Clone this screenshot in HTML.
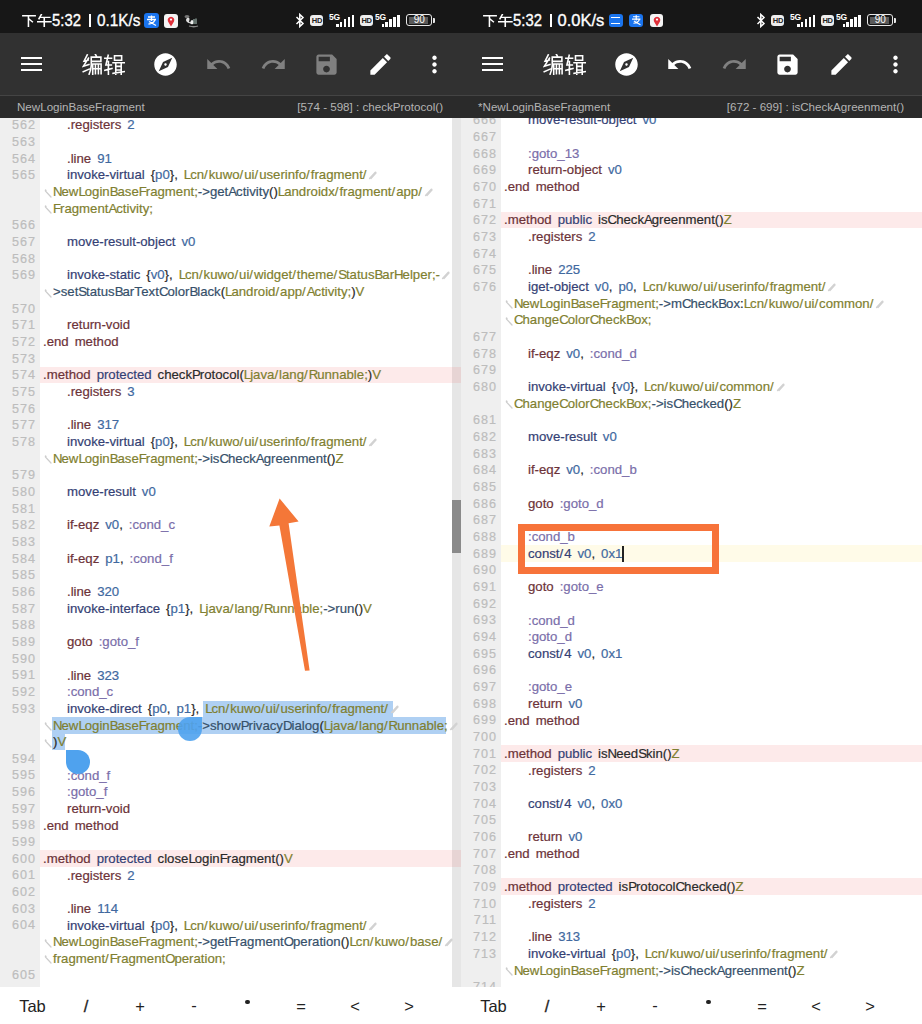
<!DOCTYPE html>
<html><head><meta charset="utf-8"><style>
*{margin:0;padding:0;box-sizing:border-box}
html,body{width:922px;height:1024px;overflow:hidden;background:#fff}
body{position:relative;font-family:"Liberation Sans",sans-serif}
.pn{position:absolute;top:0;width:461px;height:1024px;overflow:hidden;background:#fff}
.sb{position:absolute;left:0;top:0;width:461px;height:33px;background:#171717}
.tb{position:absolute;left:0;top:33px;width:461px;height:62px;background:#313131}
.dv{position:absolute;left:0;top:94.5px;width:461px;height:1.5px;background:#444}
.sh{position:absolute;left:0;top:96px;width:461px;height:22px;background:#2a2a2a;color:#b4b4b4;font-size:11.6px}
.code{position:absolute;left:0;top:118px;width:461px;height:869px;overflow:hidden}
.gut{position:absolute;left:0;top:118px;width:40px;height:869px;background:#efefef}
.ln{position:absolute;left:0;width:36.2px;text-align:right;color:#bdbdbd;letter-spacing:1.1px;-webkit-text-stroke:0.2px currentColor;font-size:12.6px;line-height:16.67px;height:16.67px;white-space:pre}
.cl{position:absolute;font-size:13.2px;line-height:16.67px;height:16.67px;white-space:pre;word-spacing:2.3px;-webkit-text-stroke:0.2px currentColor}
.cl i{font-style:normal;letter-spacing:1px}
.cl b{font-weight:normal;letter-spacing:-1px}
.hl{position:absolute;left:40px;width:421px;height:16.67px}
.pk{background:rgba(240,80,80,0.12)}
.yl{background:#fffbe8}
.we{display:inline-block;vertical-align:-1px;margin-left:1px}
.wsw{position:absolute;left:43.5px;width:9px;height:9px;line-height:0}
.K{color:#6c3238} .N{color:#343f74} .B{color:#41699f} .O{color:#7f7f30} .T{color:#36506a} .P{color:#7a6eaa} .D{color:#2a2a2a}
.bb{position:absolute;left:0;top:987px;width:461px;height:37px;background:#fff;color:#222;font-size:16.5px}
.bk{position:absolute;top:9px;width:54px;margin-left:-27px;text-align:center;line-height:20px}
</style></head><body>
<div class="pn" style="left:0px">
<div class="sb"></div>
<div class="tb"></div>
<div style="position:absolute;left:21px;top:56.5px;width:21px;height:2.2px;background:#fff"></div>
<div style="position:absolute;left:21px;top:62.8px;width:21px;height:2.2px;background:#fff"></div>
<div style="position:absolute;left:21px;top:69.1px;width:21px;height:2.2px;background:#fff"></div>
<svg style="position:absolute;left:82px;top:54px" width="21" height="21" viewBox="0 0 100 100" preserveAspectRatio="none"><path d="M25 4 L10 34 L30 29 M31 20 L7 58 L33 50 M6 84 L34 72 M64 2 L68 9 M44 15 H90 V35 H44 M44 15 V55 Q42 80 34 96 M51 48 H91 V94 M51 48 V96 M64 48 V94 M78 48 V94 M51 70 H91" stroke="#fff" stroke-width="7.5" fill="none" stroke-linecap="square"/></svg>
<svg style="position:absolute;left:104px;top:54px" width="21" height="21" viewBox="0 0 100 100" preserveAspectRatio="none"><path d="M4 20 H36 M20 6 L9 52 H35 M21 36 V98 M4 78 L38 69 M50 8 H84 V30 H50 Z M43 42 H97 M56 42 V96 M82 42 V96 M56 59 H82 M56 76 H82 M43 92 L97 84" stroke="#fff" stroke-width="7.5" fill="none" stroke-linecap="square"/></svg>
<svg style="position:absolute;left:152.00px;top:50.80px" width="27" height="27" viewBox="0 0 24 24"><path fill="#fff" d="M12 10.9c-.61 0-1.1.49-1.1 1.1s.49 1.1 1.1 1.1c.61 0 1.1-.49 1.1-1.1s-.49-1.1-1.1-1.1zM12 2C6.48 2 2 6.48 2 12s4.48 10 10 10 10-4.48 10-10S17.52 2 12 2zm2.19 12.19L6 18l3.81-8.19L18 6l-3.81 8.19z"/></svg>
<svg style="position:absolute;left:205.40px;top:50.80px" width="27" height="27" viewBox="0 0 24 24"><path fill="#808080" d="M12.5 8c-2.65 0-5.05.99-6.9 2.6L2 7v9h9l-3.62-3.62c1.39-1.16 3.16-1.88 5.12-1.88 3.54 0 6.55 2.31 7.6 5.5l2.37-.78C21.08 11.03 17.15 8 12.5 8z"/></svg>
<svg style="position:absolute;left:259.50px;top:50.80px" width="27" height="27" viewBox="0 0 24 24"><path fill="#808080" d="M18.4 10.6C16.55 8.99 14.15 8 11.5 8c-4.65 0-8.58 3.03-9.960 7.22L3.9 16c1.05-3.19 4.05-5.5 7.6-5.5 1.95 0 3.73.72 5.12 1.88L13 16h9V7l-3.6 3.6z"/></svg>
<svg style="position:absolute;left:313.20px;top:50.80px" width="27" height="27" viewBox="0 0 24 24"><path fill="#808080" d="M17 3H5c-1.11 0-2 .9-2 2v14c0 1.1.89 2 2 2h14c1.1 0 2-.9 2-2V7l-4-4zm-5 16c-1.66 0-3-1.34-3-3s1.34-3 3-3 3 1.34 3 3-1.34 3-3 3zm3-10H5V5h10v4z"/></svg>
<svg style="position:absolute;left:366.60px;top:50.80px" width="27" height="27" viewBox="0 0 24 24"><path fill="#fff" d="M3 17.25V21h3.75L17.81 9.94l-3.75-3.75L3 17.25zM20.71 7.04c.39-.39.39-1.02 0-1.41l-2.34-2.34c-.39-.39-1.02-.39-1.41 0l-1.83 1.83 3.75 3.75 1.83-1.83z"/></svg>
<svg style="position:absolute;left:420.50px;top:50.80px" width="27" height="27" viewBox="0 0 24 24"><path fill="#fff" d="M12 8c1.1 0 2-.9 2-2s-.9-2-2-2-2 .9-2 2 .9 2 2 2zm0 2c-1.1 0-2 .9-2 2s.9 2 2 2 2-.9 2-2-.9-2-2-2zm0 6c-1.1 0-2 .9-2 2s.9 2 2 2 2-.9 2-2-.9-2-2-2z"/></svg>
<svg style="position:absolute;left:22px;top:14px" width="14" height="13" viewBox="0 0 100 100" preserveAspectRatio="none"><path d="M6 14 H94 M46 14 V98 M52 40 L74 60" stroke="#fff" stroke-width="11" fill="none" stroke-linecap="square"/></svg>
<svg style="position:absolute;left:37px;top:14px" width="14.5" height="13" viewBox="0 0 100 100" preserveAspectRatio="none"><path d="M30 4 L14 36 M24 26 H88 M4 60 H96 M50 26 V98" stroke="#fff" stroke-width="11" fill="none" stroke-linecap="square"/></svg>
<div style="position:absolute;left:52px;top:9px;font-size:16.5px;line-height:22px;color:#fff;white-space:pre;transform-origin:0 50%;transform:scaleX(0.9);-webkit-text-stroke:0.35px #fff">5:32</div>
<div style="position:absolute;left:88.8px;top:14px;width:2.2px;height:13px;background:#fff"></div>
<div style="position:absolute;left:96.5px;top:9px;font-size:16.5px;line-height:22px;color:#fff;white-space:pre;transform-origin:0 50%;transform:scaleX(0.93);-webkit-text-stroke:0.35px #fff">0.1K/s</div>
<div style="position:absolute;left:144px;top:13.2px;width:14.5px;height:15px;background:#1a74ee;border-radius:3px"></div><svg style="position:absolute;left:144px;top:13.2px" width="14.5" height="15" viewBox="0 0 14.5 15"><path d="M4 4 H11 M7.5 2.5 V8 M3 6.5 H12 M4.5 11 Q9 11 11 7 M5 8.5 L12 12.5" stroke="#fff" stroke-width="1.3" fill="none"/></svg><div style="position:absolute;left:163.8px;top:13.5px;width:14px;height:14.5px;background:#f4f4f4;border-radius:3px"></div><svg style="position:absolute;left:163.8px;top:13.5px" width="14" height="14.5" viewBox="0 0 14 14.5"><path d="M7 12.5 L4 7.5 A3.3 3.3 0 1 1 10 7.5 Z" fill="#e0303a"/><circle cx="7" cy="5.6" r="1.1" fill="#fff"/></svg><svg style="position:absolute;left:183px;top:14px" width="18" height="15" viewBox="0 0 18 15"><ellipse cx="4" cy="2.5" rx="2.5" ry="1.6" fill="#777"/><path d="M4 4 Q7 3 6.5 6 Q5 8 8 8.5 Q6 10 4 8 Q2 6 4 4Z" fill="#ddd"/><path d="M8 6.5 Q10 5 10.5 8 L10 10 Q8 11 7 9Z" fill="#eee"/><path d="M11 5 V10 M13 4.5 V10" stroke="#9bb0a8" stroke-width="1.2"/><path d="M6 12 Q11 13.5 15 12" stroke="#888" stroke-width="1.3" fill="none"/></svg>
<svg style="position:absolute;left:295px;top:13px" width="10" height="15" viewBox="0 0 10 15"><path d="M1.5 4 L8 10.5 L4.8 13.5 V1.5 L8 4.5 L1.5 11" stroke="#fff" stroke-width="1.5" fill="none"/></svg>
<div style="position:absolute;left:310.4px;top:15px;width:13px;height:11.3px;background:#eee;border-radius:3px;color:#222;font-size:7.5px;font-weight:bold;line-height:11.3px;text-align:center;letter-spacing:-0.3px">HD</div>
<div style="position:absolute;left:329px;top:11.5px;font-size:8.5px;line-height:10px;color:#fff;font-weight:bold;letter-spacing:-0.3px">5G</div><div style="position:absolute;left:336.0px;top:23.7px;width:2.6px;height:3px;background:#fff"></div><div style="position:absolute;left:339.9px;top:21.7px;width:2.6px;height:5px;background:#fff"></div><div style="position:absolute;left:343.8px;top:19.2px;width:2.6px;height:7.5px;background:#fff"></div><div style="position:absolute;left:347.7px;top:17.2px;width:2.6px;height:9.5px;background:#fff"></div><div style="position:absolute;left:351.6px;top:14.7px;width:2.6px;height:12px;background:#fff"></div>
<div style="position:absolute;left:360px;top:15px;width:13px;height:11.3px;background:#eee;border-radius:3px;color:#222;font-size:7.5px;font-weight:bold;line-height:11.3px;text-align:center;letter-spacing:-0.3px">HD</div>
<div style="position:absolute;left:375px;top:11.5px;font-size:8.5px;line-height:10px;color:#fff;font-weight:bold;letter-spacing:-0.3px">5G</div><div style="position:absolute;left:381.5px;top:23.7px;width:2.6px;height:3px;background:#fff"></div><div style="position:absolute;left:385.4px;top:21.7px;width:2.6px;height:5px;background:#fff"></div><div style="position:absolute;left:389.3px;top:19.2px;width:2.6px;height:7.5px;background:#fff"></div><div style="position:absolute;left:393.2px;top:17.2px;width:2.6px;height:9.5px;background:#fff"></div><div style="position:absolute;left:397.1px;top:14.7px;width:2.6px;height:12px;background:#fff"></div>
<div style="position:absolute;left:406.3px;top:14.3px;width:26px;height:12.2px;border:1.5px solid #e8e8e8;border-radius:3px"></div>
<div style="position:absolute;left:408.8px;top:16.8px;width:19px;height:7.2px;background:#5a5a5a"></div>
<div style="position:absolute;left:433px;top:18.3px;width:2px;height:4.5px;background:#e8e8e8;border-radius:0 1px 1px 0"></div>
<div style="position:absolute;left:406.3px;top:14.3px;width:26px;height:12.2px;font-size:10px;line-height:12.2px;text-align:center;color:#fff">90</div>
<div class="dv"></div>
<div class="sh"><span style="position:absolute;left:17px;top:3.8px">NewLoginBaseFragment</span><span style="position:absolute;right:18px;top:3.8px">[574 - 598] : checkProtocol()</span></div>
<div class="code">
<div class="gut" style="top:0"></div>
<div style="position:absolute;left:0;top:-118px;width:461px;height:1024px">
<div style="position:absolute;left:203px;top:700.5px;width:189.5px;height:16.67px;background:#afd0f3"></div><div style="position:absolute;left:52px;top:717.2px;width:394px;height:16.67px;background:#afd0f3"></div><div style="position:absolute;left:52px;top:733.8px;width:12.6px;height:16.3px;background:#afd0f3"></div><div style="position:absolute;left:452px;top:118px;width:9px;height:869px;background:#e6e6e6"></div><div style="position:absolute;left:452px;top:500px;width:9px;height:53px;background:#8a8a8a"></div>
<div class="ln" style="top:117.20px">562</div>
<div class="cl" style="top:117.40px;left:67px"><span class="K">.registers</span> <span class="B">2</span></div>
<div class="ln" style="top:133.87px">563</div>
<div class="ln" style="top:150.54px">564</div>
<div class="cl" style="top:150.74px;left:67px"><span class="K">.line</span> <span class="B">91</span></div>
<div class="ln" style="top:167.21px">565</div>
<div class="cl" style="top:167.41px;left:67px"><span class="N">invoke-virtual</span> <span class="D">{</span><span class="B">p0</span><span class="D">},</span> <span class="O"><b>L</b>cn<i>/</i>kuwo<i>/</i>ui<i>/</i>userinfo<i>/</i>fragment<i>/</i></span><svg class="we" width="9" height="10" viewBox="0 0 9 10"><path d="M1.5 8.5 L6.8 2.6 Q7.9 1.6 8 3 L3 8.6" stroke="#d2d2d2" stroke-width="1.3" fill="none" stroke-linecap="round"/></svg></div>
<div class="wsw" style="top:187.58px"><svg class="ws" width="9" height="10" viewBox="0 0 9 10"><path d="M2 2.5 Q1 1.2 1.6 3.2 L7 9" stroke="#cdcdcd" stroke-width="1.3" fill="none" stroke-linecap="round"/></svg></div>
<div class="cl" style="top:184.08px;left:53px"><span class="O"><b>N</b>ew<b>L</b>ogin<b>B</b>ase<b>F</b>ragment;</span><span class="T">-&gt;get<b>A</b>ctivity</span><span class="D">()</span><span class="O"><b>L</b>androidx<i>/</i>fragment<i>/</i>app<i>/</i></span><svg class="we" width="9" height="10" viewBox="0 0 9 10"><path d="M1.5 8.5 L6.8 2.6 Q7.9 1.6 8 3 L3 8.6" stroke="#d2d2d2" stroke-width="1.3" fill="none" stroke-linecap="round"/></svg></div>
<div class="wsw" style="top:204.25px"><svg class="ws" width="9" height="10" viewBox="0 0 9 10"><path d="M2 2.5 Q1 1.2 1.6 3.2 L7 9" stroke="#cdcdcd" stroke-width="1.3" fill="none" stroke-linecap="round"/></svg></div>
<div class="cl" style="top:200.75px;left:53px"><span class="O"><b>F</b>ragment<b>A</b>ctivity;</span></div>
<div class="ln" style="top:217.22px">566</div>
<div class="ln" style="top:233.89px">567</div>
<div class="cl" style="top:234.09px;left:67px"><span class="N">move-result-object</span> <span class="B">v0</span></div>
<div class="ln" style="top:250.56px">568</div>
<div class="ln" style="top:267.23px">569</div>
<div class="cl" style="top:267.43px;left:67px"><span class="N">invoke-static</span> <span class="D">{</span><span class="B">v0</span><span class="D">},</span> <span class="O"><b>L</b>cn<i>/</i>kuwo<i>/</i>ui<i>/</i>widget<i>/</i>theme<i>/</i><b>S</b>tatus<b>B</b>ar<b>H</b>elper;-</span><svg class="we" width="9" height="10" viewBox="0 0 9 10"><path d="M1.5 8.5 L6.8 2.6 Q7.9 1.6 8 3 L3 8.6" stroke="#d2d2d2" stroke-width="1.3" fill="none" stroke-linecap="round"/></svg></div>
<div class="wsw" style="top:287.60px"><svg class="ws" width="9" height="10" viewBox="0 0 9 10"><path d="M2 2.5 Q1 1.2 1.6 3.2 L7 9" stroke="#cdcdcd" stroke-width="1.3" fill="none" stroke-linecap="round"/></svg></div>
<div class="cl" style="top:284.10px;left:53px"><span class="T">&gt;set<b>S</b>tatus<b>B</b>ar<b>T</b>ext<b>C</b>olor<b>B</b>lack</span><span class="D">(</span><span class="O"><b>L</b>android<i>/</i>app<i>/</i><b>A</b>ctivity;</span><span class="D">)</span><span class="O"><b>V</b></span></div>
<div class="ln" style="top:300.57px">570</div>
<div class="ln" style="top:317.24px">571</div>
<div class="cl" style="top:317.44px;left:67px"><span class="K">return-void</span></div>
<div class="ln" style="top:333.91px">572</div>
<div class="cl" style="top:334.11px;left:43px"><span class="K">.end method</span></div>
<div class="ln" style="top:350.58px">573</div>
<div class="hl pk" style="top:366.65px"></div>
<div class="ln" style="top:367.25px">574</div>
<div class="cl" style="top:367.45px;left:43px"><span class="K">.method</span> <span class="N">protected</span> <span class="D">check<b>P</b>rotocol</span><span class="D">(</span><span class="O"><b>L</b>java<i>/</i>lang<i>/</i><b>R</b>unnable;</span><span class="D">)</span><span class="O"><b>V</b></span></div>
<div class="ln" style="top:383.92px">575</div>
<div class="cl" style="top:384.12px;left:67px"><span class="K">.registers</span> <span class="B">3</span></div>
<div class="ln" style="top:400.59px">576</div>
<div class="ln" style="top:417.26px">577</div>
<div class="cl" style="top:417.46px;left:67px"><span class="K">.line</span> <span class="B">317</span></div>
<div class="ln" style="top:433.93px">578</div>
<div class="cl" style="top:434.13px;left:67px"><span class="N">invoke-virtual</span> <span class="D">{</span><span class="B">p0</span><span class="D">},</span> <span class="O"><b>L</b>cn<i>/</i>kuwo<i>/</i>ui<i>/</i>userinfo<i>/</i>fragment<i>/</i></span><svg class="we" width="9" height="10" viewBox="0 0 9 10"><path d="M1.5 8.5 L6.8 2.6 Q7.9 1.6 8 3 L3 8.6" stroke="#d2d2d2" stroke-width="1.3" fill="none" stroke-linecap="round"/></svg></div>
<div class="wsw" style="top:454.30px"><svg class="ws" width="9" height="10" viewBox="0 0 9 10"><path d="M2 2.5 Q1 1.2 1.6 3.2 L7 9" stroke="#cdcdcd" stroke-width="1.3" fill="none" stroke-linecap="round"/></svg></div>
<div class="cl" style="top:450.80px;left:53px"><span class="O"><b>N</b>ew<b>L</b>ogin<b>B</b>ase<b>F</b>ragment;</span><span class="T">-&gt;is<b>C</b>heck<b>A</b>greenment</span><span class="D">()</span><span class="O"><b>Z</b></span></div>
<div class="ln" style="top:467.27px">579</div>
<div class="ln" style="top:483.94px">580</div>
<div class="cl" style="top:484.14px;left:67px"><span class="N">move-result</span> <span class="B">v0</span></div>
<div class="ln" style="top:500.61px">581</div>
<div class="ln" style="top:517.28px">582</div>
<div class="cl" style="top:517.48px;left:67px"><span class="K">if-eqz</span> <span class="B">v0</span><span class="D">,</span> <span class="P">:cond_c</span></div>
<div class="ln" style="top:533.95px">583</div>
<div class="ln" style="top:550.62px">584</div>
<div class="cl" style="top:550.82px;left:67px"><span class="K">if-eqz</span> <span class="B">p1</span><span class="D">,</span> <span class="P">:cond_f</span></div>
<div class="ln" style="top:567.29px">585</div>
<div class="ln" style="top:583.96px">586</div>
<div class="cl" style="top:584.16px;left:67px"><span class="K">.line</span> <span class="B">320</span></div>
<div class="ln" style="top:600.63px">587</div>
<div class="cl" style="top:600.83px;left:67px"><span class="N">invoke-interface</span> <span class="D">{</span><span class="B">p1</span><span class="D">},</span> <span class="O"><b>L</b>java<i>/</i>lang<i>/</i><b>R</b>unnable;</span><span class="T">-&gt;run</span><span class="D">()</span><span class="O"><b>V</b></span></div>
<div class="ln" style="top:617.30px">588</div>
<div class="ln" style="top:633.97px">589</div>
<div class="cl" style="top:634.17px;left:67px"><span class="K">goto</span> <span class="P">:goto_f</span></div>
<div class="ln" style="top:650.64px">590</div>
<div class="ln" style="top:667.31px">591</div>
<div class="cl" style="top:667.51px;left:67px"><span class="K">.line</span> <span class="B">323</span></div>
<div class="ln" style="top:683.98px">592</div>
<div class="cl" style="top:684.18px;left:67px"><span class="P">:cond_c</span></div>
<div class="ln" style="top:700.65px">593</div>
<div class="cl" style="top:700.85px;left:67px"><span class="N">invoke-direct</span> <span class="D">{</span><span class="B">p0</span><span class="D">,</span> <span class="B">p1</span><span class="D">},</span> <span class="O"><b>L</b>cn<i>/</i>kuwo<i>/</i>ui<i>/</i>userinfo<i>/</i>fragment<i>/</i></span><svg class="we" width="9" height="10" viewBox="0 0 9 10"><path d="M1.5 8.5 L6.8 2.6 Q7.9 1.6 8 3 L3 8.6" stroke="#d2d2d2" stroke-width="1.3" fill="none" stroke-linecap="round"/></svg></div>
<div class="wsw" style="top:721.02px"><svg class="ws" width="9" height="10" viewBox="0 0 9 10"><path d="M2 2.5 Q1 1.2 1.6 3.2 L7 9" stroke="#cdcdcd" stroke-width="1.3" fill="none" stroke-linecap="round"/></svg></div>
<div class="cl" style="top:717.52px;left:53px"><span class="O"><b>N</b>ew<b>L</b>ogin<b>B</b>ase<b>F</b>ragment;</span><span class="T">-&gt;show<b>P</b>rivacy<b>D</b>ialog</span><span class="D">(</span><span class="O"><b>L</b>java<i>/</i>lang<i>/</i><b>R</b>unnable;</span><svg class="we" width="9" height="10" viewBox="0 0 9 10"><path d="M1.5 8.5 L6.8 2.6 Q7.9 1.6 8 3 L3 8.6" stroke="#d2d2d2" stroke-width="1.3" fill="none" stroke-linecap="round"/></svg></div>
<div class="wsw" style="top:737.69px"><svg class="ws" width="9" height="10" viewBox="0 0 9 10"><path d="M2 2.5 Q1 1.2 1.6 3.2 L7 9" stroke="#cdcdcd" stroke-width="1.3" fill="none" stroke-linecap="round"/></svg></div>
<div class="cl" style="top:734.19px;left:53px"><span class="D">)</span><span class="O"><b>V</b></span></div>
<div class="ln" style="top:750.66px">594</div>
<div class="ln" style="top:767.33px">595</div>
<div class="cl" style="top:767.53px;left:67px"><span class="P">:cond_f</span></div>
<div class="ln" style="top:784.00px">596</div>
<div class="cl" style="top:784.20px;left:67px"><span class="P">:goto_f</span></div>
<div class="ln" style="top:800.67px">597</div>
<div class="cl" style="top:800.87px;left:67px"><span class="K">return-void</span></div>
<div class="ln" style="top:817.34px">598</div>
<div class="cl" style="top:817.54px;left:43px"><span class="K">.end method</span></div>
<div class="ln" style="top:834.01px">599</div>
<div class="hl pk" style="top:850.08px"></div>
<div class="ln" style="top:850.68px">600</div>
<div class="cl" style="top:850.88px;left:43px"><span class="K">.method</span> <span class="N">protected</span> <span class="D">close<b>L</b>ogin<b>F</b>ragment</span><span class="D">()</span><span class="O"><b>V</b></span></div>
<div class="ln" style="top:867.35px">601</div>
<div class="cl" style="top:867.55px;left:67px"><span class="K">.registers</span> <span class="B">2</span></div>
<div class="ln" style="top:884.02px">602</div>
<div class="ln" style="top:900.69px">603</div>
<div class="cl" style="top:900.89px;left:67px"><span class="K">.line</span> <span class="B">114</span></div>
<div class="ln" style="top:917.36px">604</div>
<div class="cl" style="top:917.56px;left:67px"><span class="N">invoke-virtual</span> <span class="D">{</span><span class="B">p0</span><span class="D">},</span> <span class="O"><b>L</b>cn<i>/</i>kuwo<i>/</i>ui<i>/</i>userinfo<i>/</i>fragment<i>/</i></span><svg class="we" width="9" height="10" viewBox="0 0 9 10"><path d="M1.5 8.5 L6.8 2.6 Q7.9 1.6 8 3 L3 8.6" stroke="#d2d2d2" stroke-width="1.3" fill="none" stroke-linecap="round"/></svg></div>
<div class="wsw" style="top:937.73px"><svg class="ws" width="9" height="10" viewBox="0 0 9 10"><path d="M2 2.5 Q1 1.2 1.6 3.2 L7 9" stroke="#cdcdcd" stroke-width="1.3" fill="none" stroke-linecap="round"/></svg></div>
<div class="cl" style="top:934.23px;left:53px"><span class="O"><b>N</b>ew<b>L</b>ogin<b>B</b>ase<b>F</b>ragment;</span><span class="T">-&gt;get<b>F</b>ragment<b>O</b>peration</span><span class="D">()</span><span class="O"><b>L</b>cn<i>/</i>kuwo<i>/</i>base<i>/</i></span><svg class="we" width="9" height="10" viewBox="0 0 9 10"><path d="M1.5 8.5 L6.8 2.6 Q7.9 1.6 8 3 L3 8.6" stroke="#d2d2d2" stroke-width="1.3" fill="none" stroke-linecap="round"/></svg></div>
<div class="wsw" style="top:954.40px"><svg class="ws" width="9" height="10" viewBox="0 0 9 10"><path d="M2 2.5 Q1 1.2 1.6 3.2 L7 9" stroke="#cdcdcd" stroke-width="1.3" fill="none" stroke-linecap="round"/></svg></div>
<div class="cl" style="top:950.90px;left:53px"><span class="O">fragment<i>/</i><b>F</b>ragment<b>O</b>peration;</span></div>
<div class="ln" style="top:967.37px">605</div>
</div>
</div>
<div class="bb"><div class="bk" style="left:32.5px">Tab</div><div class="bk" style="left:86px;-webkit-text-stroke:0.3px #222">/</div><div class="bk" style="left:140px">+</div><div class="bk" style="left:194px;top:7.5px">-</div><div style="position:absolute;left:245.3px;top:13px;width:4.4px;height:4.4px;border-radius:50%;background:#222"></div><div class="bk" style="left:301px">=</div><div class="bk" style="left:355px">&lt;</div><div class="bk" style="left:409px">&gt;</div></div>
</div>
<div class="pn" style="left:461px">
<div class="sb"></div>
<div class="tb"></div>
<div style="position:absolute;left:21px;top:56.5px;width:21px;height:2.2px;background:#fff"></div>
<div style="position:absolute;left:21px;top:62.8px;width:21px;height:2.2px;background:#fff"></div>
<div style="position:absolute;left:21px;top:69.1px;width:21px;height:2.2px;background:#fff"></div>
<svg style="position:absolute;left:82px;top:54px" width="21" height="21" viewBox="0 0 100 100" preserveAspectRatio="none"><path d="M25 4 L10 34 L30 29 M31 20 L7 58 L33 50 M6 84 L34 72 M64 2 L68 9 M44 15 H90 V35 H44 M44 15 V55 Q42 80 34 96 M51 48 H91 V94 M51 48 V96 M64 48 V94 M78 48 V94 M51 70 H91" stroke="#fff" stroke-width="7.5" fill="none" stroke-linecap="square"/></svg>
<svg style="position:absolute;left:104px;top:54px" width="21" height="21" viewBox="0 0 100 100" preserveAspectRatio="none"><path d="M4 20 H36 M20 6 L9 52 H35 M21 36 V98 M4 78 L38 69 M50 8 H84 V30 H50 Z M43 42 H97 M56 42 V96 M82 42 V96 M56 59 H82 M56 76 H82 M43 92 L97 84" stroke="#fff" stroke-width="7.5" fill="none" stroke-linecap="square"/></svg>
<svg style="position:absolute;left:152.00px;top:50.80px" width="27" height="27" viewBox="0 0 24 24"><path fill="#fff" d="M12 10.9c-.61 0-1.1.49-1.1 1.1s.49 1.1 1.1 1.1c.61 0 1.1-.49 1.1-1.1s-.49-1.1-1.1-1.1zM12 2C6.48 2 2 6.48 2 12s4.48 10 10 10 10-4.48 10-10S17.52 2 12 2zm2.19 12.19L6 18l3.81-8.19L18 6l-3.81 8.19z"/></svg>
<svg style="position:absolute;left:205.40px;top:50.80px" width="27" height="27" viewBox="0 0 24 24"><path fill="#fff" d="M12.5 8c-2.65 0-5.05.99-6.9 2.6L2 7v9h9l-3.62-3.62c1.39-1.16 3.16-1.88 5.12-1.88 3.54 0 6.55 2.31 7.6 5.5l2.37-.78C21.08 11.03 17.15 8 12.5 8z"/></svg>
<svg style="position:absolute;left:259.50px;top:50.80px" width="27" height="27" viewBox="0 0 24 24"><path fill="#808080" d="M18.4 10.6C16.55 8.99 14.15 8 11.5 8c-4.65 0-8.58 3.03-9.960 7.22L3.9 16c1.05-3.19 4.05-5.5 7.6-5.5 1.95 0 3.73.72 5.12 1.88L13 16h9V7l-3.6 3.6z"/></svg>
<svg style="position:absolute;left:313.20px;top:50.80px" width="27" height="27" viewBox="0 0 24 24"><path fill="#fff" d="M17 3H5c-1.11 0-2 .9-2 2v14c0 1.1.89 2 2 2h14c1.1 0 2-.9 2-2V7l-4-4zm-5 16c-1.66 0-3-1.34-3-3s1.34-3 3-3 3 1.34 3 3-1.34 3-3 3zm3-10H5V5h10v4z"/></svg>
<svg style="position:absolute;left:366.60px;top:50.80px" width="27" height="27" viewBox="0 0 24 24"><path fill="#fff" d="M3 17.25V21h3.75L17.81 9.94l-3.75-3.75L3 17.25zM20.71 7.04c.39-.39.39-1.02 0-1.41l-2.34-2.34c-.39-.39-1.02-.39-1.41 0l-1.83 1.83 3.75 3.75 1.83-1.83z"/></svg>
<svg style="position:absolute;left:420.50px;top:50.80px" width="27" height="27" viewBox="0 0 24 24"><path fill="#fff" d="M12 8c1.1 0 2-.9 2-2s-.9-2-2-2-2 .9-2 2 .9 2 2 2zm0 2c-1.1 0-2 .9-2 2s.9 2 2 2 2-.9 2-2-.9-2-2-2zm0 6c-1.1 0-2 .9-2 2s.9 2 2 2 2-.9 2-2-.9-2-2-2z"/></svg>
<svg style="position:absolute;left:22px;top:14px" width="14" height="13" viewBox="0 0 100 100" preserveAspectRatio="none"><path d="M6 14 H94 M46 14 V98 M52 40 L74 60" stroke="#fff" stroke-width="11" fill="none" stroke-linecap="square"/></svg>
<svg style="position:absolute;left:37px;top:14px" width="14.5" height="13" viewBox="0 0 100 100" preserveAspectRatio="none"><path d="M30 4 L14 36 M24 26 H88 M4 60 H96 M50 26 V98" stroke="#fff" stroke-width="11" fill="none" stroke-linecap="square"/></svg>
<div style="position:absolute;left:52px;top:9px;font-size:16.5px;line-height:22px;color:#fff;white-space:pre;transform-origin:0 50%;transform:scaleX(0.9);-webkit-text-stroke:0.35px #fff">5:32</div>
<div style="position:absolute;left:88.8px;top:14px;width:2.2px;height:13px;background:#fff"></div>
<div style="position:absolute;left:96.5px;top:9px;font-size:16.5px;line-height:22px;color:#fff;white-space:pre;transform-origin:0 50%;transform:scaleX(1.0);-webkit-text-stroke:0.35px #fff">0.0K/s</div>
<div style="position:absolute;left:147.7px;top:14px;width:14px;height:12.8px;background:#1a74ee;border-radius:3px"></div><div style="position:absolute;left:150.2px;top:17px;width:9px;height:6.5px;border-top:1.5px solid #fff;border-bottom:1.5px solid #fff"></div><div style="position:absolute;left:168px;top:14px;width:14px;height:12.8px;background:#1a74ee;border-radius:3px"></div><svg style="position:absolute;left:168px;top:13.2px" width="14" height="14" viewBox="0 0 14.5 15"><path d="M4 4 H11 M7.5 2.5 V8 M3 6.5 H12 M4.5 11 Q9 11 11 7 M5 8.5 L12 12.5" stroke="#fff" stroke-width="1.3" fill="none"/></svg><div style="position:absolute;left:188.5px;top:14px;width:13.6px;height:12.8px;background:#f4f4f4;border-radius:3px"></div><svg style="position:absolute;left:188.5px;top:13.5px" width="14" height="14.5" viewBox="0 0 14 14.5"><path d="M7 12.5 L4 7.5 A3.3 3.3 0 1 1 10 7.5 Z" fill="#e0303a"/><circle cx="7" cy="5.6" r="1.1" fill="#fff"/></svg>
<svg style="position:absolute;left:295px;top:13px" width="10" height="15" viewBox="0 0 10 15"><path d="M1.5 4 L8 10.5 L4.8 13.5 V1.5 L8 4.5 L1.5 11" stroke="#fff" stroke-width="1.5" fill="none"/></svg>
<div style="position:absolute;left:310.4px;top:15px;width:13px;height:11.3px;background:#eee;border-radius:3px;color:#222;font-size:7.5px;font-weight:bold;line-height:11.3px;text-align:center;letter-spacing:-0.3px">HD</div>
<div style="position:absolute;left:329px;top:11.5px;font-size:8.5px;line-height:10px;color:#fff;font-weight:bold;letter-spacing:-0.3px">5G</div><div style="position:absolute;left:336.0px;top:23.7px;width:2.6px;height:3px;background:#fff"></div><div style="position:absolute;left:339.9px;top:21.7px;width:2.6px;height:5px;background:#fff"></div><div style="position:absolute;left:343.8px;top:19.2px;width:2.6px;height:7.5px;background:#fff"></div><div style="position:absolute;left:347.7px;top:17.2px;width:2.6px;height:9.5px;background:#fff"></div><div style="position:absolute;left:351.6px;top:14.7px;width:2.6px;height:12px;background:#fff"></div>
<div style="position:absolute;left:360px;top:15px;width:13px;height:11.3px;background:#eee;border-radius:3px;color:#222;font-size:7.5px;font-weight:bold;line-height:11.3px;text-align:center;letter-spacing:-0.3px">HD</div>
<div style="position:absolute;left:375px;top:11.5px;font-size:8.5px;line-height:10px;color:#fff;font-weight:bold;letter-spacing:-0.3px">5G</div><div style="position:absolute;left:381.5px;top:23.7px;width:2.6px;height:3px;background:#fff"></div><div style="position:absolute;left:385.4px;top:21.7px;width:2.6px;height:5px;background:#fff"></div><div style="position:absolute;left:389.3px;top:19.2px;width:2.6px;height:7.5px;background:#fff"></div><div style="position:absolute;left:393.2px;top:17.2px;width:2.6px;height:9.5px;background:#fff"></div><div style="position:absolute;left:397.1px;top:14.7px;width:2.6px;height:12px;background:#fff"></div>
<div style="position:absolute;left:406.3px;top:14.3px;width:26px;height:12.2px;border:1.5px solid #e8e8e8;border-radius:3px"></div>
<div style="position:absolute;left:408.8px;top:16.8px;width:19px;height:7.2px;background:#5a5a5a"></div>
<div style="position:absolute;left:433px;top:18.3px;width:2px;height:4.5px;background:#e8e8e8;border-radius:0 1px 1px 0"></div>
<div style="position:absolute;left:406.3px;top:14.3px;width:26px;height:12.2px;font-size:10px;line-height:12.2px;text-align:center;color:#fff">90</div>
<div class="dv"></div>
<div class="sh"><span style="position:absolute;left:17px;top:3.8px">*NewLoginBaseFragment</span><span style="position:absolute;right:18px;top:3.8px">[672 - 699] : isCheckAgreenment()</span></div>
<div class="code">
<div class="gut" style="top:0"></div>
<div style="position:absolute;left:0;top:-118px;width:461px;height:1024px">

<div class="ln" style="top:112.20px">666</div>
<div class="cl" style="top:112.40px;left:67px"><span class="N">move-result-object</span> <span class="B">v0</span></div>
<div class="ln" style="top:128.87px">667</div>
<div class="ln" style="top:145.54px">668</div>
<div class="cl" style="top:145.74px;left:67px"><span class="P">:goto_13</span></div>
<div class="ln" style="top:162.21px">669</div>
<div class="cl" style="top:162.41px;left:67px"><span class="K">return-object</span> <span class="B">v0</span></div>
<div class="ln" style="top:178.88px">670</div>
<div class="cl" style="top:179.08px;left:43px"><span class="K">.end method</span></div>
<div class="ln" style="top:195.55px">671</div>
<div class="hl pk" style="top:211.62px"></div>
<div class="ln" style="top:212.22px">672</div>
<div class="cl" style="top:212.42px;left:43px"><span class="K">.method</span> <span class="N">public</span> <span class="D">is<b>C</b>heck<b>A</b>greenment</span><span class="D">()</span><span class="O"><b>Z</b></span></div>
<div class="ln" style="top:228.89px">673</div>
<div class="cl" style="top:229.09px;left:67px"><span class="K">.registers</span> <span class="B">2</span></div>
<div class="ln" style="top:245.56px">674</div>
<div class="ln" style="top:262.23px">675</div>
<div class="cl" style="top:262.43px;left:67px"><span class="K">.line</span> <span class="B">225</span></div>
<div class="ln" style="top:278.90px">676</div>
<div class="cl" style="top:279.10px;left:67px"><span class="N">iget-object</span> <span class="B">v0</span><span class="D">,</span> <span class="B">p0</span><span class="D">,</span> <span class="O"><b>L</b>cn<i>/</i>kuwo<i>/</i>ui<i>/</i>userinfo<i>/</i>fragment<i>/</i></span><svg class="we" width="9" height="10" viewBox="0 0 9 10"><path d="M1.5 8.5 L6.8 2.6 Q7.9 1.6 8 3 L3 8.6" stroke="#d2d2d2" stroke-width="1.3" fill="none" stroke-linecap="round"/></svg></div>
<div class="wsw" style="top:299.27px"><svg class="ws" width="9" height="10" viewBox="0 0 9 10"><path d="M2 2.5 Q1 1.2 1.6 3.2 L7 9" stroke="#cdcdcd" stroke-width="1.3" fill="none" stroke-linecap="round"/></svg></div>
<div class="cl" style="top:295.77px;left:53px"><span class="O"><b>N</b>ew<b>L</b>ogin<b>B</b>ase<b>F</b>ragment;</span><span class="T">-&gt;m<b>C</b>heck<b>B</b>ox</span><span class="D">:</span><span class="O"><b>L</b>cn<i>/</i>kuwo<i>/</i>ui<i>/</i>common<i>/</i></span><svg class="we" width="9" height="10" viewBox="0 0 9 10"><path d="M1.5 8.5 L6.8 2.6 Q7.9 1.6 8 3 L3 8.6" stroke="#d2d2d2" stroke-width="1.3" fill="none" stroke-linecap="round"/></svg></div>
<div class="wsw" style="top:315.94px"><svg class="ws" width="9" height="10" viewBox="0 0 9 10"><path d="M2 2.5 Q1 1.2 1.6 3.2 L7 9" stroke="#cdcdcd" stroke-width="1.3" fill="none" stroke-linecap="round"/></svg></div>
<div class="cl" style="top:312.44px;left:53px"><span class="O"><b>C</b>hange<b>C</b>olor<b>C</b>heck<b>B</b>ox;</span></div>
<div class="ln" style="top:328.91px">677</div>
<div class="ln" style="top:345.58px">678</div>
<div class="cl" style="top:345.78px;left:67px"><span class="K">if-eqz</span> <span class="B">v0</span><span class="D">,</span> <span class="P">:cond_d</span></div>
<div class="ln" style="top:362.25px">679</div>
<div class="ln" style="top:378.92px">680</div>
<div class="cl" style="top:379.12px;left:67px"><span class="N">invoke-virtual</span> <span class="D">{</span><span class="B">v0</span><span class="D">},</span> <span class="O"><b>L</b>cn<i>/</i>kuwo<i>/</i>ui<i>/</i>common<i>/</i></span><svg class="we" width="9" height="10" viewBox="0 0 9 10"><path d="M1.5 8.5 L6.8 2.6 Q7.9 1.6 8 3 L3 8.6" stroke="#d2d2d2" stroke-width="1.3" fill="none" stroke-linecap="round"/></svg></div>
<div class="wsw" style="top:399.29px"><svg class="ws" width="9" height="10" viewBox="0 0 9 10"><path d="M2 2.5 Q1 1.2 1.6 3.2 L7 9" stroke="#cdcdcd" stroke-width="1.3" fill="none" stroke-linecap="round"/></svg></div>
<div class="cl" style="top:395.79px;left:53px"><span class="O"><b>C</b>hange<b>C</b>olor<b>C</b>heck<b>B</b>ox;</span><span class="T">-&gt;is<b>C</b>hecked</span><span class="D">()</span><span class="O"><b>Z</b></span></div>
<div class="ln" style="top:412.26px">681</div>
<div class="ln" style="top:428.93px">682</div>
<div class="cl" style="top:429.13px;left:67px"><span class="N">move-result</span> <span class="B">v0</span></div>
<div class="ln" style="top:445.60px">683</div>
<div class="ln" style="top:462.27px">684</div>
<div class="cl" style="top:462.47px;left:67px"><span class="K">if-eqz</span> <span class="B">v0</span><span class="D">,</span> <span class="P">:cond_b</span></div>
<div class="ln" style="top:478.94px">685</div>
<div class="ln" style="top:495.61px">686</div>
<div class="cl" style="top:495.81px;left:67px"><span class="K">goto</span> <span class="P">:goto_d</span></div>
<div class="ln" style="top:512.28px">687</div>
<div class="ln" style="top:528.95px">688</div>
<div class="cl" style="top:529.15px;left:67px"><span class="P">:cond_b</span></div>
<div class="hl yl" style="top:545.02px"></div>
<div class="ln" style="top:545.62px">689</div>
<div class="cl" style="top:545.82px;left:67px"><span class="N">const<i>/</i>4</span> <span class="B">v0</span><span class="D">,</span> <span class="B">0x1</span></div>
<div class="ln" style="top:562.29px">690</div>
<div class="ln" style="top:578.96px">691</div>
<div class="cl" style="top:579.16px;left:67px"><span class="K">goto</span> <span class="P">:goto_e</span></div>
<div class="ln" style="top:595.63px">692</div>
<div class="ln" style="top:612.30px">693</div>
<div class="cl" style="top:612.50px;left:67px"><span class="P">:cond_d</span></div>
<div class="ln" style="top:628.97px">694</div>
<div class="cl" style="top:629.17px;left:67px"><span class="P">:goto_d</span></div>
<div class="ln" style="top:645.64px">695</div>
<div class="cl" style="top:645.84px;left:67px"><span class="N">const<i>/</i>4</span> <span class="B">v0</span><span class="D">,</span> <span class="B">0x1</span></div>
<div class="ln" style="top:662.31px">696</div>
<div class="ln" style="top:678.98px">697</div>
<div class="cl" style="top:679.18px;left:67px"><span class="P">:goto_e</span></div>
<div class="ln" style="top:695.65px">698</div>
<div class="cl" style="top:695.85px;left:67px"><span class="K">return</span> <span class="B">v0</span></div>
<div class="ln" style="top:712.32px">699</div>
<div class="cl" style="top:712.52px;left:43px"><span class="K">.end method</span></div>
<div class="ln" style="top:728.99px">700</div>
<div class="hl pk" style="top:745.06px"></div>
<div class="ln" style="top:745.66px">701</div>
<div class="cl" style="top:745.86px;left:43px"><span class="K">.method</span> <span class="N">public</span> <span class="D">is<b>N</b>eed<b>S</b>kin</span><span class="D">()</span><span class="O"><b>Z</b></span></div>
<div class="ln" style="top:762.33px">702</div>
<div class="cl" style="top:762.53px;left:67px"><span class="K">.registers</span> <span class="B">2</span></div>
<div class="ln" style="top:779.00px">703</div>
<div class="ln" style="top:795.67px">704</div>
<div class="cl" style="top:795.87px;left:67px"><span class="N">const<i>/</i>4</span> <span class="B">v0</span><span class="D">,</span> <span class="B">0x0</span></div>
<div class="ln" style="top:812.34px">705</div>
<div class="ln" style="top:829.01px">706</div>
<div class="cl" style="top:829.21px;left:67px"><span class="K">return</span> <span class="B">v0</span></div>
<div class="ln" style="top:845.68px">707</div>
<div class="cl" style="top:845.88px;left:43px"><span class="K">.end method</span></div>
<div class="ln" style="top:862.35px">708</div>
<div class="hl pk" style="top:878.42px"></div>
<div class="ln" style="top:879.02px">709</div>
<div class="cl" style="top:879.22px;left:43px"><span class="K">.method</span> <span class="N">protected</span> <span class="D">is<b>P</b>rotocol<b>C</b>hecked</span><span class="D">()</span><span class="O"><b>Z</b></span></div>
<div class="ln" style="top:895.69px">710</div>
<div class="cl" style="top:895.89px;left:67px"><span class="K">.registers</span> <span class="B">2</span></div>
<div class="ln" style="top:912.36px">711</div>
<div class="ln" style="top:929.03px">712</div>
<div class="cl" style="top:929.23px;left:67px"><span class="K">.line</span> <span class="B">313</span></div>
<div class="ln" style="top:945.70px">713</div>
<div class="cl" style="top:945.90px;left:67px"><span class="N">invoke-virtual</span> <span class="D">{</span><span class="B">p0</span><span class="D">},</span> <span class="O"><b>L</b>cn<i>/</i>kuwo<i>/</i>ui<i>/</i>userinfo<i>/</i>fragment<i>/</i></span><svg class="we" width="9" height="10" viewBox="0 0 9 10"><path d="M1.5 8.5 L6.8 2.6 Q7.9 1.6 8 3 L3 8.6" stroke="#d2d2d2" stroke-width="1.3" fill="none" stroke-linecap="round"/></svg></div>
<div class="wsw" style="top:966.07px"><svg class="ws" width="9" height="10" viewBox="0 0 9 10"><path d="M2 2.5 Q1 1.2 1.6 3.2 L7 9" stroke="#cdcdcd" stroke-width="1.3" fill="none" stroke-linecap="round"/></svg></div>
<div class="cl" style="top:962.57px;left:53px"><span class="O"><b>N</b>ew<b>L</b>ogin<b>B</b>ase<b>F</b>ragment;</span><span class="T">-&gt;is<b>C</b>heck<b>A</b>greenment</span><span class="D">()</span><span class="O"><b>Z</b></span></div>
<div class="ln" style="top:979.04px">714</div>
</div>
</div>
<div class="bb"><div class="bk" style="left:32.5px">Tab</div><div class="bk" style="left:86px;-webkit-text-stroke:0.3px #222">/</div><div class="bk" style="left:140px">+</div><div class="bk" style="left:194px;top:7.5px">-</div><div style="position:absolute;left:245.3px;top:13px;width:4.4px;height:4.4px;border-radius:50%;background:#222"></div><div class="bk" style="left:301px">=</div><div class="bk" style="left:355px">&lt;</div><div class="bk" style="left:409px">&gt;</div></div>
</div>
<div style="position:absolute;left:0;top:0;width:922px;height:1024px"><div style="position:absolute;left:177.6px;top:717.4px;width:24px;height:23.5px;background:#4fa2ee;opacity:.9;border-radius:12px 0 12px 12px"></div><div style="position:absolute;left:65.8px;top:750.2px;width:24.5px;height:24px;background:#4fa2ee;border-radius:0 12px 12px 12px"></div><svg style="position:absolute;left:0;top:0" width="461" height="1024"><polygon points="279.6,498.6 298.6,521.4 288.6,523.2 309.6,670.5 305,670.8 279.4,525.4 269.3,526.5" fill="#f47738"/></svg><div style="position:absolute;left:517.7px;top:523.5px;width:201.6px;height:50.1px;border:7.2px solid #f7733a"></div><div style="position:absolute;left:622.3px;top:545.5px;width:1.5px;height:16px;background:#222"></div></div>
</body></html>
